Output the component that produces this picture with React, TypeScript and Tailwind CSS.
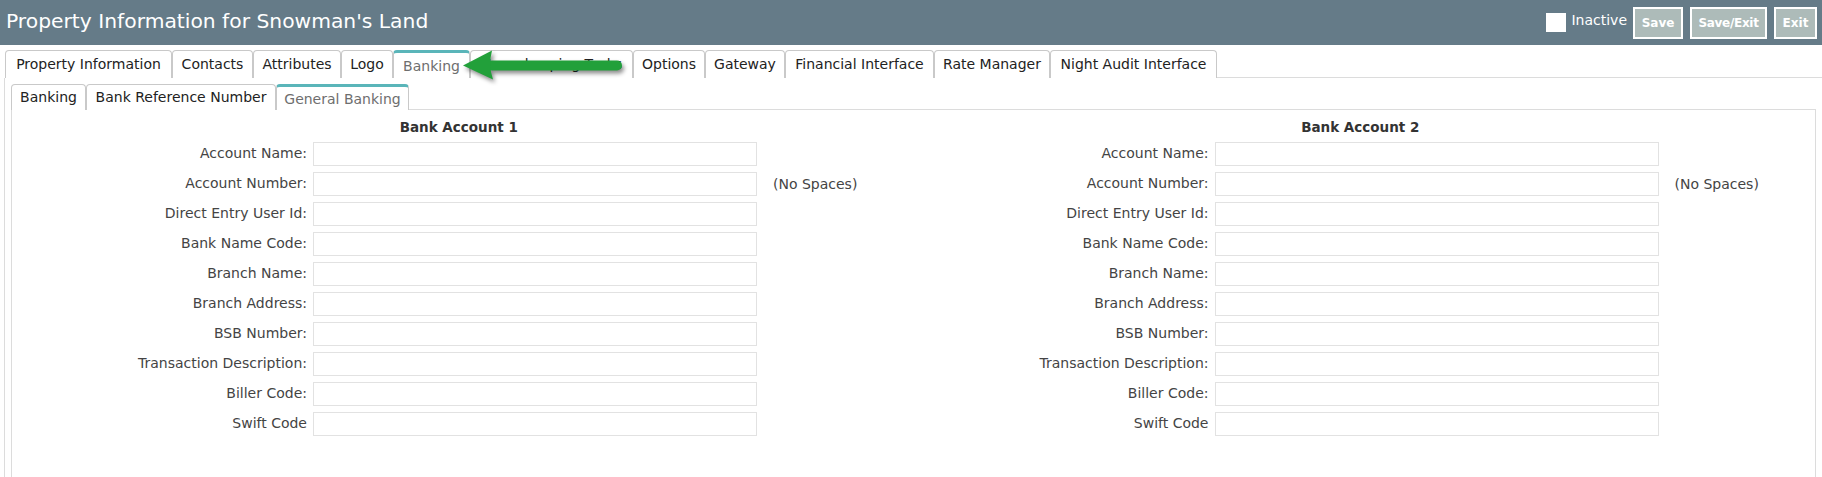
import React from 'react';
import clsx from 'clsx';

const outerTabs = [
  { label: 'Property Information', w: 'w-[167px]' },
  { label: 'Contacts', w: 'w-[81px]' },
  { label: 'Attributes', w: 'w-[88px]' },
  { label: 'Logo', w: 'w-[52px]' },
  { label: 'Banking', w: 'w-[77px]', active: true },
  { label: 'Housekeeping Tasks', w: 'w-[163px]' },
  { label: 'Options', w: 'w-[72px]' },
  { label: 'Gateway', w: 'w-[80px]' },
  { label: 'Financial Interface', w: 'w-[149px]' },
  { label: 'Rate Manager', w: 'w-[116px]' },
  { label: 'Night Audit Interface', w: 'w-[167px]' },
];

const subTabs = [
  { label: 'Banking', w: 'w-[75px]' },
  { label: 'Bank Reference Number', w: 'w-[190px]' },
  { label: 'General Banking', w: 'w-[133px]', active: true },
];

const fields = [
  'Account Name:',
  'Account Number:',
  'Direct Entry User Id:',
  'Bank Name Code:',
  'Branch Name:',
  'Branch Address:',
  'BSB Number:',
  'Transaction Description:',
  'Biller Code:',
  'Swift Code',
];

interface TabProps {
  label: string;
  w: string;
  active?: boolean;
}

const Tab: React.FC<TabProps> = ({ label, w, active }) => (
  <div
    className={clsx(
      'flex items-center justify-center whitespace-nowrap bg-white border border-b-0 border-[#c9c9c9] rounded-t-[4px] text-[14px]',
      w,
      active ? 'border-t-[3px] border-t-[#5ab5b9] text-[#6e6e6e] pt-[1px]' : 'text-[#222]'
    )}
  >
    {label}
  </div>
);

const GreenArrow = () => (
  <svg
    className="absolute left-[458px] top-[46px] drop-shadow-[2px_3px_2px_rgba(0,0,0,0.45)]"
    width="172"
    height="38"
    viewBox="0 0 172 38"
  >
    <line x1="34" y1="19.5" x2="159" y2="19.5" stroke="#22a03a" strokeWidth="10" strokeLinecap="round" />
    <path d="M5 19.5 L34 4.5 Q30 19.5 35 33.5 Z" fill="#22a03a" />
  </svg>
);

const AccountColumn: React.FC<{ n: number }> = ({ n }) => (
  <div>
    <div className="h-[20px] leading-[20px] text-center pr-[8px] font-bold text-[13.5px] text-[#333]">
      Bank Account {n}
    </div>
    <div className="mt-[5px] flex flex-col gap-[6px]">
      {fields.map((f) => (
        <div key={f} className="flex items-center h-[24px]">
          <div className="w-[295px] text-right text-[14px] text-[#444] pb-[1px]">{f}</div>
          <div className="ml-[6px] w-[444px] h-[24px] border border-[#e2e2e2] bg-white" />
          {f === 'Account Number:' && (
            <span className="ml-[16px] text-[14px] text-[#444]">(No Spaces)</span>
          )}
        </div>
      ))}
    </div>
  </div>
);

export default function App() {
  return (
    <div className="relative w-[1822px] h-[477px] overflow-hidden bg-white font-['DejaVu_Sans',Verdana,sans-serif]">
      <div className="h-[45px] bg-[#657b88] flex items-center justify-between pl-[6px] pr-[5px]">
        <div className="text-[20.3px] text-white pb-[2px] whitespace-nowrap">
          Property Information for Snowman's Land
        </div>
        <div className="flex items-center h-full">
          <div className="w-[20px] h-[19px] bg-white" />
          <span className="ml-[5px] text-[14px] text-white pb-[4px]">Inactive</span>
          <div className="ml-[6px] flex items-center gap-[7px]">
            <button className="w-[50px] h-[32px] bg-[#adbbb9] border-2 border-white text-white text-[12px] font-bold">Save</button>
            <button className="w-[77px] h-[32px] bg-[#adbbb9] border-2 border-white text-white text-[12px] font-bold tracking-[-0.3px]">Save/Exit</button>
            <button className="w-[43px] h-[32px] bg-[#adbbb9] border-2 border-white text-white text-[12px] font-bold">Exit</button>
          </div>
        </div>
      </div>

      <div className="pl-[5px] pt-[5px]">
        <div className="flex h-[28px]">
          {outerTabs.map((t) => (
            <Tab key={t.label} {...t} />
          ))}
          <div className="flex-1 border-b border-[#dcdcdc]" />
        </div>
      </div>

      <div className="ml-[4px] border-l border-[#dcdcdc] pl-[6px] pt-[6px] pr-[6px] h-[400px]">
        <div className="flex h-[26px]">
          {subTabs.map((t) => (
            <Tab key={t.label} {...t} />
          ))}
          <div className="flex-1 border-b border-r border-[#dcdcdc] mt-[25px]" />
        </div>
        <div className="border-l border-r border-[#dcdcdc] h-[370px] pt-[7px]">
          <div className="grid grid-cols-2">
            <AccountColumn n={1} />
            <AccountColumn n={2} />
          </div>
        </div>
      </div>

      <GreenArrow />
    </div>
  );
}
